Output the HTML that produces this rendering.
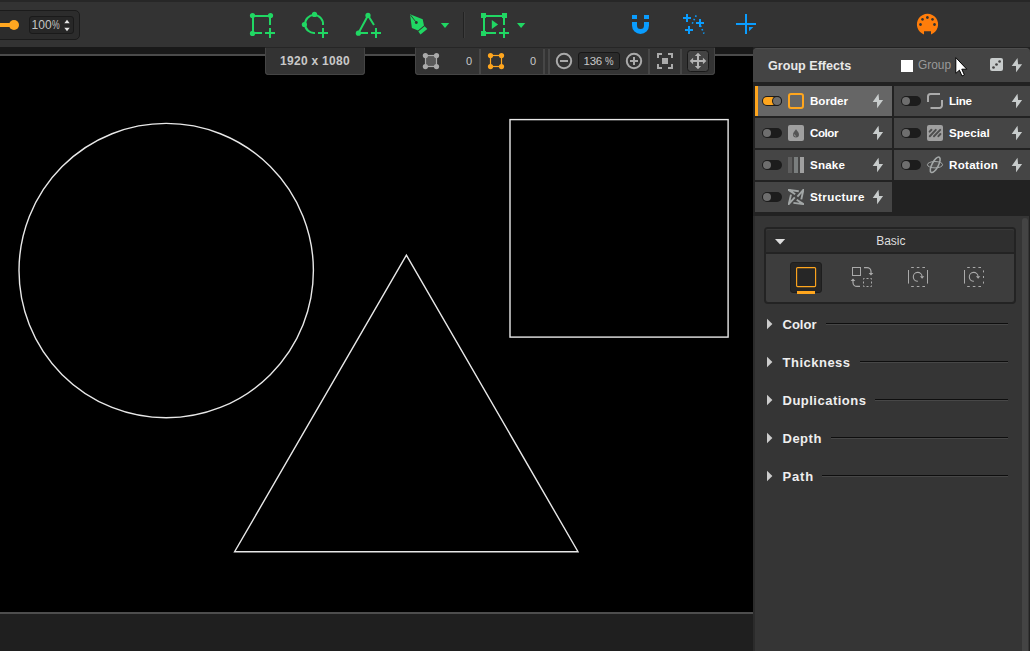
<!DOCTYPE html>
<html lang="en">
<head>
<meta charset="utf-8">
<title>Group Effects</title>
<style>
*{box-sizing:border-box;margin:0;padding:0}
html,body{width:1030px;height:651px;overflow:hidden;background:#000;font-family:"Liberation Sans",sans-serif;}
.abs,#app *{position:absolute}
#app{position:relative;width:1030px;height:651px;overflow:hidden;background:#000}
#topbar{left:0;top:0;width:1030px;height:47px;background:#333;border-top:2px solid #272727}
#topgap{left:0;top:47px;width:1030px;height:7px;background:#191919}
#topline{left:0;top:54px;width:753px;height:2px;background:#4b4b4b}
#canvas{left:0;top:55px;width:753px;height:557px;background:#000}
#botline{left:0;top:612px;width:753px;height:2px;background:#4d4d4d}
#footer{left:0;top:614px;width:753px;height:37px;background:#1f1f1f}
/* slider group */
#sgroup{left:-6px;top:10px;width:86px;height:30px;background:#2c2c2c;border:1px solid #1b1b1b;border-radius:5px}
#strack{left:0;top:23px;width:14px;height:4px;background:#ffa620}
#sknob{left:9px;top:20px;width:10px;height:10px;border-radius:50%;background:#ffa620}
#spin{left:29px;top:16px;width:45px;height:18px;background:#272727;border:1px solid #1a1a1a;border-radius:3px}
#spin span{left:1.6px;top:2.2px;font-size:12px;line-height:13px;color:#c4c4c4;white-space:nowrap}
.pc{position:static !important;display:inline-block;transform:scaleX(.72);transform-origin:0 50%}
.tip{top:48px;height:27px;background:#333;border-radius:0 0 4px 4px;box-shadow:inset 1px 0 #454545,inset -1px 0 #454545,inset 0 -1px #454545}
#size{left:265px;width:100px;}
#size span{left:0;width:100px;top:7px;text-align:center;font-size:12px;line-height:13px;font-weight:bold;color:#c8c8c8;letter-spacing:0.3px}
#ctb{left:415px;width:300px}
.num{font-size:11px;line-height:13px;color:#c8c8c8;top:7px}
.sep{top:1px;width:2px;height:26px;background:#464646}
#zoombox{left:163px;top:4px;width:42px;height:18px;background:#2a2a2a;border:1px solid #171717;border-radius:3px}
#zoombox span{left:4.6px;top:2.3px;font-size:11.5px;line-height:13px;color:#c8c8c8;white-space:nowrap;letter-spacing:-0.3px;word-spacing:0.3px}
#movebtn{left:272px;top:2px;width:22px;height:22px;background:#444;border:1px solid #191919;border-radius:3.5px}
/* panel */
#panel{left:753px;top:48px;width:277px;height:603px;background:#222}
#phead{left:0;top:0;width:277px;height:34px;background:#444;border-radius:4px 4px 0 0;border-top:1px solid #4e4e4e}
#phead .title{left:15px;top:9.6px;font-size:12.6px;line-height:15px;font-weight:bold;color:#e8e8e8;white-space:nowrap}
#chk{left:148px;top:11px;width:12px;height:12px;background:#fff}
#grp{left:165px;top:8.8px;font-size:11.9px;line-height:14px;color:#999}
.row{height:30px;background:#454545}
.row.l{left:2px;width:137px}
.row.r{left:141px;width:136px}
.row .lbl{left:55px;top:8px;font-size:11.6px;line-height:14px;font-weight:bold;color:#fff;white-space:nowrap}
.tog{left:7px;top:10px;width:20px;height:10px;border-radius:5px;background:#1c1c1c}
.tog i{left:1px;top:1px;width:8px;height:8px;border-radius:50%;background:#6e6e6e}
.tog u{left:1px;top:1px;width:13px;height:8px;border-radius:4px;background:#ffa61e}
.row.sel{background:#666;border-left:3px solid #ffa61e}
#lower{left:0;top:168px;width:276px;height:435px;background:#353535;border-left:2px solid #2b2b2b}
#scroll{left:269px;top:170px;width:6px;height:440px;background:#444;border-radius:3px 3px 0 0}
#basic{left:11px;top:179px;width:252px;height:77px;border:2px solid #232323;border-radius:4px;background:#3d3d3d}
#basic .hd{left:0;top:0;width:248px;height:25px;background:#2f2f2f;border-bottom:2px solid #232323;box-shadow:inset 0 1px #393939;border-radius:2px 2px 0 0}
#basic .hd span{left:0.8px;width:248px;text-align:center;top:5.3px;font-size:12px;line-height:14px;color:#ddd}
.sec{left:0;width:277px;height:20px}
.sec b{left:29.5px;top:2.7px;font-size:13px;line-height:15px;color:#eee;white-space:nowrap}
.sec i{top:9px;height:2px;background:#0e0e0e;border-bottom:1px solid #474747;right:22px}
#selbtn{left:24px;top:33px;width:32px;height:31px;background:#262626;border:1px solid #1e1e1e;border-radius:3px}
svg{overflow:visible}
</style>
</head>
<body>
<div id="app">
  <div id="canvas"></div>
  <svg id="shapes" style="left:0;top:0" width="753" height="651" viewBox="0 0 753 651" fill="none" stroke="#e8e8e8" stroke-width="1.4">
    <circle cx="166.2" cy="270.6" r="147.2"/>
    <path d="M406.4 255.1 L578 551.75 L234.6 551.75 Z"/>
    <rect x="510" y="119.6" width="218.1" height="217.5"/>
  </svg>
  <div id="topgap"></div>
  <div id="topline"></div>
  <div id="botline"></div>
  <div id="footer"></div>
  <div id="topbar">
    <div id="sgroup" style="top:8px"></div>
    <div id="strack" style="top:21px"></div>
    <div id="sknob" style="top:18px"></div>
    <div id="spin" style="top:14px"><span>100<span class="pc">%</span></span></div>
  </div>
  <div id="size" class="tip"><span>1920 x 1080</span></div>
  <div id="ctb" class="tip">
    <span class="num" style="left:51px">0</span>
    <div class="sep" style="left:64px"></div>
    <span class="num" style="left:115px">0</span>
    <div class="sep" style="left:128px"></div>
    <div class="sep" style="left:133px"></div>
    <div id="zoombox"><span>136 <span class="pc" style="transform:scaleX(.84)">%</span></span></div>
    <div class="sep" style="left:233px"></div>
    <div class="sep" style="left:265px"></div>
    <div id="movebtn"></div>
  </div>

  <svg id="icons" style="left:0;top:0" width="1030" height="651" viewBox="0 0 1030 651" fill="none">
    <!-- top bar: shape tools -->
    <g stroke="#20d763" stroke-width="2" fill="none">
      <path d="M270 25V16H253V33H262M265 33H275M270 28V38"/>
      <path d="M323 25A9 9 0 1 0 315 33M318 33H328M323 28V38"/>
      <path d="M374 25L368 15.5L358.5 33H368M371 33H381M376 28V38"/>
      <path d="M504 25V16H484V33H496M499 33H509M504 28V38"/>
    </g>
    <g fill="#20d763">
      <circle cx="252.5" cy="15.5" r="2.6"/><circle cx="270.5" cy="15.5" r="2.6"/><circle cx="252.5" cy="33.4" r="2.6"/>
      <circle cx="314.5" cy="14.4" r="2.6"/><circle cx="304.4" cy="24.5" r="2.6"/>
      <circle cx="368" cy="15.4" r="2.6"/><circle cx="358.4" cy="33.2" r="2.6"/>
      <rect x="481" y="13" width="5" height="5"/><rect x="502" y="13" width="5" height="5"/><rect x="481" y="31" width="5" height="5"/>
      <path d="M491.8 19.9L498.1 24.5L491.8 29.1Z"/>
      <path d="M440.9 23H449.2L445 27.9Z"/>
      <path d="M517 23H525.3L521.1 27.9Z"/>
      <!-- pen -->
      <path fill-rule="evenodd" d="M410 14.3L422.7 19.3L424 25.4L418 30.6L411.9 28.1ZM416.3 21.1a1.5 1.5 0 1 0 0.01 0Z"/>
      <path d="M424.6 26.2L427.3 29L420.5 34.6L418.3 31.4Z"/>
    </g>
    <path d="M410.3 14.8L415.6 21.6" stroke="#333" stroke-width="0.9"/>
    <rect x="463" y="12" width="1" height="26" fill="#222"/>
    <rect x="464" y="12" width="1" height="26" fill="#3c3c3c"/>
    <!-- magnet -->
    <g fill="#0a9dff">
      <rect x="632" y="15" width="5" height="4"/><rect x="644" y="15" width="5" height="4"/>
      <path d="M632 22H637V25.4A3.5 3.5 0 0 0 644 25.4V22H649V25.4A8.5 8.5 0 0 1 632 25.4Z"/>
      <path d="M749 27H753.4L749 31.2Z"/>
    </g>
    <g stroke="#0a9dff" stroke-width="2">
      <path d="M683 18H691M687 14V22"/>
      <path d="M696 23H704M700 19V27"/>
      <path d="M685 30H693M689 26V34"/>
      <path d="M736 24H756M746 14V34"/>
    </g>
    <g stroke="#0a9dff" stroke-width="1.6" stroke-dasharray="1.6 2.2">
      <path d="M696.2 15.4L692 24.2"/>
      <path d="M700.5 25.5L704 33.6"/>
    </g>
    <!-- midi -->
    <path fill="#ff7d0a" fill-rule="evenodd" d="M924 34.4A10.6 10.6 0 1 1 931 34.4V31.2H924Z
      M927.4 16.1a1.4 1.4 0 1 0 0.01 0Z M922.5 18a1.4 1.4 0 1 0 0.01 0Z M932.5 18a1.4 1.4 0 1 0 0.01 0Z M920.5 23.1a1.4 1.4 0 1 0 0.01 0Z M934.5 23.1a1.4 1.4 0 1 0 0.01 0Z"/>
    <!-- slider arrows -->
    <path d="M64.3 23.2L67 19.7L69.7 23.2ZM64.3 27.8L67 31.3L69.7 27.8Z" fill="#e6e6e6"/>

    <!-- canvas toolbar -->
    <rect x="425.5" y="55.5" width="11" height="11" fill="#595959" stroke="#aaa" stroke-width="1.2"/>
    <g fill="#aaa"><circle cx="425.4" cy="55.6" r="2.6"/><circle cx="436.5" cy="55.6" r="2.6"/><circle cx="425.4" cy="66.6" r="2.6"/><circle cx="436.5" cy="66.6" r="2.6"/></g>
    <rect x="490.5" y="55.5" width="11" height="11" stroke="#ffa61e" stroke-width="1.2"/>
    <g fill="#ffa61e"><circle cx="490.5" cy="55.6" r="2.6"/><circle cx="501.5" cy="55.6" r="2.6"/><circle cx="490.5" cy="66.6" r="2.6"/><circle cx="501.5" cy="66.6" r="2.6"/></g>
    <g stroke="#aaa" stroke-width="2">
      <circle cx="564" cy="61" r="7.2"/><path d="M560 61H568"/>
      <circle cx="634" cy="61" r="7.2"/><path d="M630 61H638M634 57V65"/>
      <path d="M658 58V54H662M668 54H672V58M672 64V68H668M662 68H658V64"/>
    </g>
    <rect x="662" y="58" width="6" height="6" fill="#aaa"/>
    <g stroke="#b4b4b4" stroke-width="2"><path d="M698 55V67M692 61H704"/></g>
    <path fill="#b4b4b4" d="M698 52.7L701.2 56.1H694.8ZM698 69.3L701.2 65.9H694.8ZM689.7 61L693.1 57.8V64.2ZM706.3 61L702.9 57.8V64.2Z"/>
  </svg>
  <div style="left:753px;top:47px;width:277px;height:1px;background:#222"></div>
  <div style="left:265px;top:47px;width:100px;height:1px;background:#262626"></div>
  <div style="left:415px;top:47px;width:300px;height:1px;background:#262626"></div>
  <div id="panel">
    <div id="phead">
      <span class="title">Group Effects</span>
      <div id="chk"></div>
      <span id="grp">Group</span>
    </div>
    <div class="row l sel" style="top:38px"><div class="tog" style="left:4px"><u></u><i style="left:11px;box-shadow:0 0 0 1px #1c1c1c"></i></div><span class="lbl" style="left:52px;letter-spacing:0px">Border</span></div>
    <div class="row r" style="top:38px"><div class="tog"><i></i></div><span class="lbl" style="letter-spacing:-0.3px">Line</span></div>
    <div class="row l" style="top:70px"><div class="tog"><i></i></div><span class="lbl" style="letter-spacing:-0.45px">Color</span></div>
    <div class="row r" style="top:70px"><div class="tog"><i></i></div><span class="lbl" style="letter-spacing:0px">Special</span></div>
    <div class="row l" style="top:102px"><div class="tog"><i></i></div><span class="lbl" style="letter-spacing:0.2px">Snake</span></div>
    <div class="row r" style="top:102px"><div class="tog"><i></i></div><span class="lbl" style="letter-spacing:0.27px">Rotation</span></div>
    <div class="row l" style="top:134px"><div class="tog"><i></i></div><span class="lbl" style="letter-spacing:0.36px">Structure</span></div>
    <div id="lower"></div>
    <div id="scroll"></div>
    <div id="basic"><div class="hd"><span>Basic</span></div><div id="selbtn"></div></div>
    <div class="sec" style="top:266px"><b>Color</b><i style="left:73px"></i></div>
    <div class="sec" style="top:304px"><b style="letter-spacing:0.5px">Thickness</b><i style="left:107px"></i></div>
    <div class="sec" style="top:342px"><b style="letter-spacing:0.49px">Duplications</b><i style="left:122px"></i></div>
    <div class="sec" style="top:380px"><b style="letter-spacing:0.5px">Depth</b><i style="left:78px"></i></div>
    <div class="sec" style="top:418px"><b style="letter-spacing:0.8px">Path</b><i style="left:69px"></i></div>
  </div>
<svg id="picons" style="left:0;top:0" width="1030" height="651" viewBox="0 0 1030 651" fill="none">
<rect x="990" y="58" width="13" height="13" rx="2" fill="#c8cccc"/>
<g fill="#444"><circle cx="999.6" cy="61.5" r="1.35"/><circle cx="996.5" cy="64.5" r="1.35"/><circle cx="993.5" cy="67.5" r="1.35"/></g>
<path d="M1017.5 57.9L1011.7 66.0L1016.0 66.0L1016.1 72.3L1022.1 64.2L1018.1 64.2Z" fill="#c8cccc"/>
<path d="M878.5 93.8L872.7 101.9L877.0 101.9L877.1 108.2L883.1 100.1L879.1 100.1Z" fill="#c8cccc"/>
<path d="M878.5 125.8L872.7 133.9L877.0 133.9L877.1 140.2L883.1 132.1L879.1 132.1Z" fill="#c8cccc"/>
<path d="M878.5 157.8L872.7 165.9L877.0 165.9L877.1 172.2L883.1 164.1L879.1 164.1Z" fill="#c8cccc"/>
<path d="M878.5 189.8L872.7 197.9L877.0 197.9L877.1 204.2L883.1 196.1L879.1 196.1Z" fill="#c8cccc"/>
<path d="M1017.5 93.8L1011.7 101.9L1016.0 101.9L1016.1 108.2L1022.1 100.1L1018.1 100.1Z" fill="#c8cccc"/>
<path d="M1017.5 125.8L1011.7 133.9L1016.0 133.9L1016.1 140.2L1022.1 132.1L1018.1 132.1Z" fill="#c8cccc"/>
<path d="M1017.5 157.8L1011.7 165.9L1016.0 165.9L1016.1 172.2L1022.1 164.1L1018.1 164.1Z" fill="#c8cccc"/>
<rect x="789" y="94" width="14" height="14" rx="2" stroke="#ffa61e" stroke-width="2"/>
<rect x="788" y="125" width="16" height="16" rx="2" fill="#a0a0a0"/>
<path d="M796 129.3C797.6 131.2 799 133 799 134.5A3 3 0 0 1 793 134.5C793 133 794.4 131.2 796 129.3Z" fill="#555"/>
<path d="M794.2 134.3A1.9 1.9 0 0 0 796 136.2" stroke="#a0a0a0" stroke-width="0.8" fill="none"/>
<rect x="788" y="157" width="4" height="16" fill="#5e5e5e"/><rect x="794" y="157" width="4" height="16" fill="#7a7e7e"/><rect x="800" y="157" width="4" height="16" fill="#a0a0a0"/>
<clipPath id="cs"><rect x="788" y="189" width="16" height="16"/></clipPath><g clip-path="url(#cs)" stroke="#a2a6a6" stroke-width="1.9" fill="none" stroke-linejoin="miter" stroke-miterlimit="10"><path d="M798.8 191.2L788.6 189.9L795.2 194.3"/><path d="M801.3 199.4L803.4 189.8L797.4 196.7"/><path d="M793.4 202.9L803.4 204.1L796.7 199.8"/><path d="M791 194.6L788.8 204L794.8 197.3"/></g>
<g stroke="#aaa" stroke-width="2" fill="none"><path d="M928 102V96.5A2.5 2.5 0 0 1 930.5 94H940"/><path d="M930.5 108H939.5A2.5 2.5 0 0 0 942 105.5V100"/></g>
<rect x="927" y="125" width="16" height="16" rx="2" fill="#a0a0a0"/>
<g stroke="#4e4e4e" stroke-width="2" stroke-linecap="round"><path d="M929.6 131.6L931.4 129.8"/><path d="M929.8 136.2L935.8 129.9"/><path d="M934 136.2L940.2 129.9"/><path d="M938.4 136.2L940.4 134"/></g>
<clipPath id="cr"><ellipse cx="935.2" cy="164.8" rx="8.6" ry="3.2" transform="rotate(-62 935.2 164.8)"/></clipPath><ellipse cx="935" cy="164.7" rx="7.6" ry="3.2" fill="#525252" clip-path="url(#cr)"/><ellipse cx="935.2" cy="164.8" rx="8.6" ry="3.2" transform="rotate(-62 935.2 164.8)" stroke="#a4a8a8" stroke-width="1.6"/><ellipse cx="935" cy="164.7" rx="7.6" ry="3.2" stroke="#a4a8a8" stroke-width="1"/>
<path d="M775 239H785.2L780.1 244.4Z" fill="#ddd"/>
<path d="M767 318.8L772.4 324L767 329.2Z" fill="#ccc"/>
<path d="M767 356.8L772.4 362L767 367.2Z" fill="#ccc"/>
<path d="M767 394.8L772.4 400L767 405.2Z" fill="#ccc"/>
<path d="M767 432.8L772.4 438L767 443.2Z" fill="#ccc"/>
<path d="M767 470.8L772.4 476L767 481.2Z" fill="#ccc"/>
<rect x="796.6" y="267.6" width="19" height="19" rx="1" stroke="#ffa61e" stroke-width="1.15"/>
<rect x="797" y="291" width="18" height="3" fill="#ffa61e"/>
<g stroke="#aaa" stroke-width="1" fill="none"><rect x="852.5" y="267.5" width="8" height="8"/><rect x="863.5" y="278.5" width="8" height="8" stroke-dasharray="2 2" stroke-dashoffset="1"/><path d="M864 267.6H867A4 4 0 0 1 871 271.6V273.5" stroke-width="1.2"/><path d="M860 286.4H857A4 4 0 0 1 853 282.4V280.5" stroke-width="1.2"/></g>
<path d="M868.6 273H873.4L871 275.6ZM850.6 281H855.4L853 278.4Z" fill="#aaa"/>
<g stroke="#aaa" stroke-width="1" fill="none"><path d="M911.2 267.5H925M911.2 286.5H925" stroke-dasharray="2.6 3"/><path d="M908.5 270V283.6"/><path d="M927.5 270V283.6"/></g>
<g stroke="#aaa" fill="none"><path d="M917.9000000000001 281.2A4.4 4.4 0 1 1 922.1 276.6" stroke-width="1.1"/></g><path d="M919.9000000000001 276.2H924.3000000000001L922.1 278.8Z" fill="#aaa"/>
<g stroke="#aaa" stroke-width="1" fill="none"><path d="M967.2 267.5H981M967.2 286.5H981" stroke-dasharray="2.6 3"/><path d="M964.5 270V283.6"/><path d="M983.5 270.4V284" stroke-dasharray="2 3.6"/></g>
<g stroke="#aaa" fill="none"><path d="M973.9000000000001 281.2A4.4 4.4 0 1 1 978.1 276.6" stroke-width="1.1"/></g><path d="M975.9000000000001 276.2H980.3000000000001L978.1 278.8Z" fill="#aaa"/>
<path d="M955.8 57.6V73.4L959.4 70.2L962 76L964.4 74.9L961.8 69.2H966.8Z" fill="#fff" stroke="#000" stroke-width="1" stroke-linejoin="miter"/>
</svg>
</div>
</body>
</html>
